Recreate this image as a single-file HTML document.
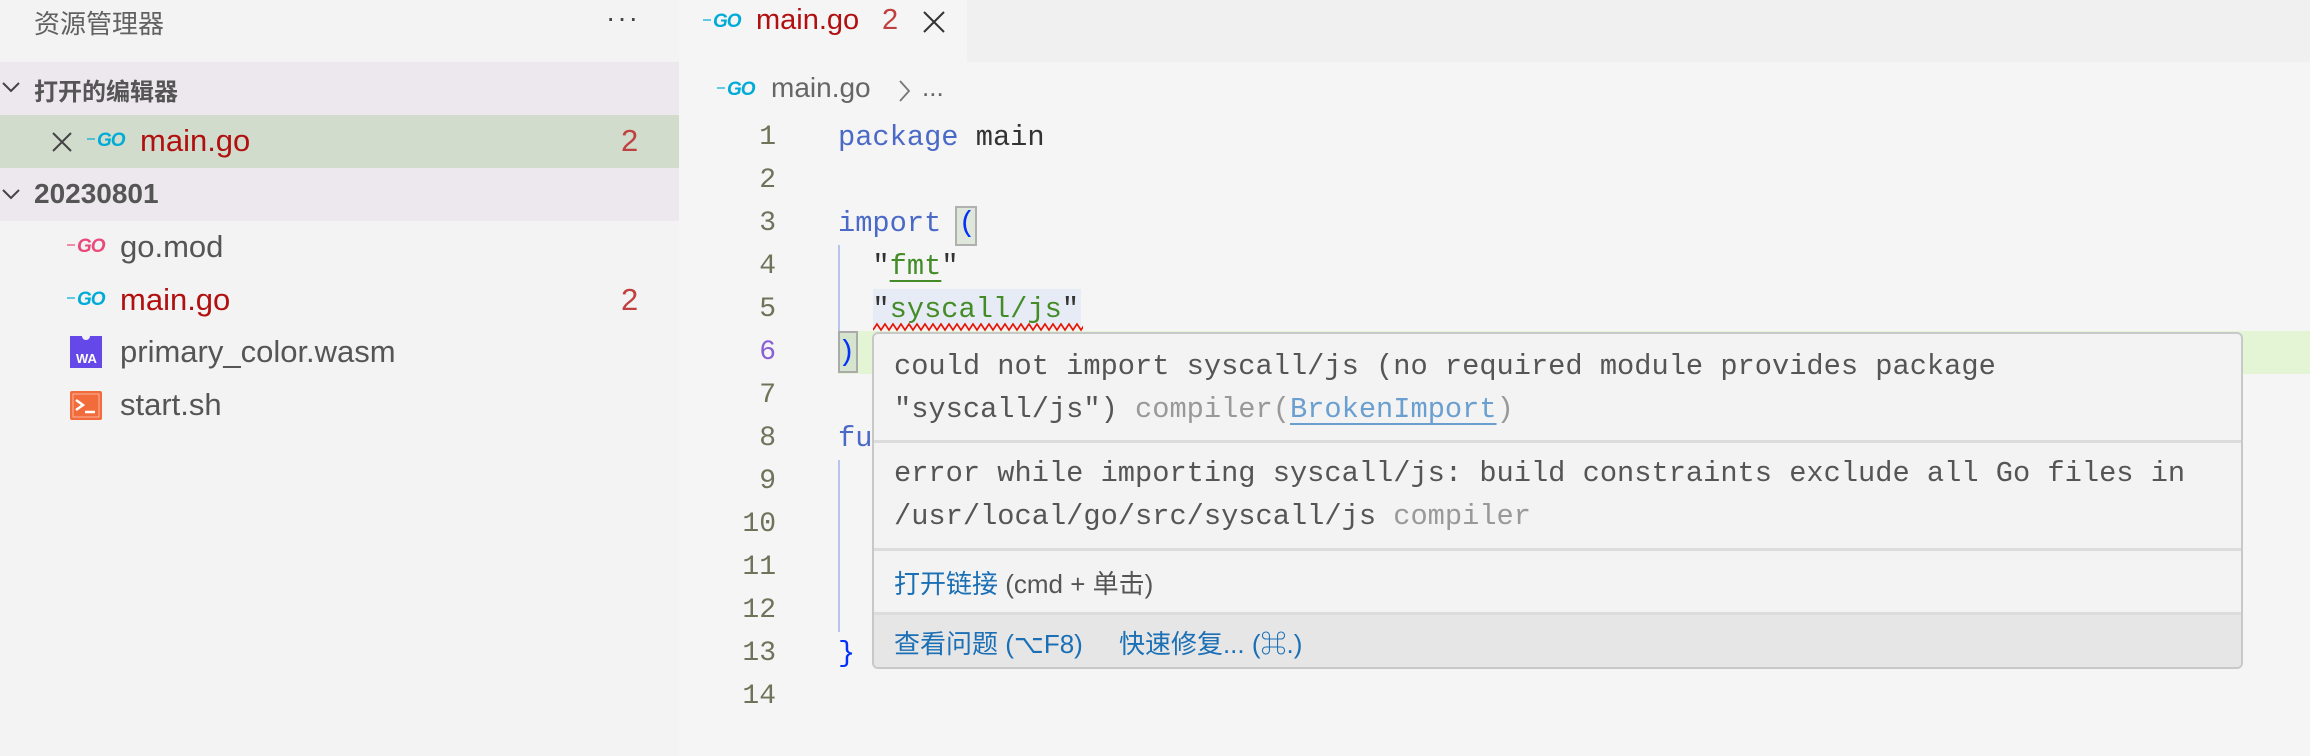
<!DOCTYPE html>
<html><head><meta charset="utf-8"><style>
*{margin:0;padding:0;box-sizing:border-box}
body{width:2310px;height:756px;overflow:hidden;background:#f5f5f5;font-family:"Liberation Sans","Noto Sans CJK SC",sans-serif;position:relative}
.abs{position:absolute;white-space:nowrap}
#side{position:absolute;left:0;top:0;width:679px;height:756px;background:#f3f3f3}
.row{position:absolute;left:0;width:679px;height:53px}
.go{position:absolute;font-family:"Liberation Sans",sans-serif;font-weight:bold;font-style:italic;font-size:19px;letter-spacing:-1px}
.go:before{content:"";position:absolute;left:-10px;top:8px;width:8px;height:2px;border-top:2px solid currentColor;opacity:.6}
.mono{font-family:"Liberation Mono",monospace;font-size:28.7px}
.ln{position:absolute;width:100px;left:676px;text-align:right;color:#6e7359;font-family:"Liberation Mono",monospace;font-size:28px;line-height:43px}
.code{position:absolute;left:838px;line-height:43px;color:#333;font-family:"Liberation Mono",monospace;font-size:28.7px;white-space:pre}
.kw{color:#4b69c6}.str{color:#448c27}
.f{font-size:31px}
</style></head><body>
<div id="side">
 <div class="abs" style="left:34px;top:4px;font-size:26px;color:#616161">资源管理器</div>
 <div class="abs" style="left:606px;top:2px;font-size:28px;color:#444;letter-spacing:2px">···</div>
 <div class="row" style="top:62px;background:#ede8ee"></div>
 <svg class="abs" style="left:2px;top:80px" width="18" height="14"><path d="M1 3 L9 11 L17 3" stroke="#444" stroke-width="2" fill="none"/></svg>
 <div class="abs" style="left:34px;top:72px;font-size:24px;font-weight:bold;color:#555">打开的编辑器</div>
 <div class="row" style="top:115px;background:#d1dccc"></div>
 <svg class="abs" style="left:51px;top:131px" width="22" height="22"><path d="M2 2 L20 20 M20 2 L2 20" stroke="#444" stroke-width="2"/></svg>
 <div class="go" style="left:97px;top:130px;color:#00acd7">GO</div>
 <div class="abs f" style="left:140px;top:123px;color:#b11010">main.go</div>
 <div class="abs f" style="left:621px;top:123px;color:#c04040">2</div>
 <div class="row" style="top:168px;background:#ede8ee"></div>
 <svg class="abs" style="left:2px;top:187px" width="18" height="14"><path d="M1 3 L9 11 L17 3" stroke="#444" stroke-width="2" fill="none"/></svg>
 <div class="abs" style="left:34px;top:178px;font-size:28px;font-weight:bold;color:#555">20230801</div>
 <div class="go" style="left:77px;top:236px;color:#ea4a7a">GO</div>
 <div class="abs f" style="left:120px;top:229px;color:#555">go.mod</div>
 <div class="go" style="left:77px;top:289px;color:#00acd7">GO</div>
 <div class="abs f" style="left:120px;top:282px;color:#b11010">main.go</div>
 <div class="abs f" style="left:621px;top:282px;color:#c04040">2</div>
 <div class="abs" style="left:70px;top:336px;width:32px;height:32px;background:#6548e8;color:#fff;font-size:13px;font-weight:bold;padding:15px 0 0 6px">WA<div style="position:absolute;left:12px;top:-3px;width:8px;height:7px;border-radius:0 0 4px 4px;background:#f3f3f3"></div></div>
 <div class="abs f" style="left:120px;top:334px;color:#555">primary_color.wasm</div>
 <div class="abs" style="left:70px;top:391px;width:32px;height:29px;background:#f26b3a;border-radius:2px"><svg width="32" height="29"><path d="M6 9 L13 14 L6 19" stroke="#fff" stroke-width="2.5" fill="none"/><path d="M15 21 H25" stroke="#fff" stroke-width="2.5"/><rect x="3" y="3" width="26" height="23" fill="none" stroke="#fff" stroke-width="1" opacity=".5"/></svg></div>
 <div class="abs f" style="left:120px;top:387px;color:#555">start.sh</div>
</div>
<div class="abs" style="left:679px;top:0;width:1631px;height:62px;background:#f0f0f0"></div>
<div class="abs" style="left:679px;top:0;width:288px;height:62px;background:#f5f5f5"></div>
<div class="go" style="left:713px;top:11px;color:#00acd7">GO</div>
<div class="abs" style="left:756px;top:4px;font-size:29px;color:#b11010">main.go</div>
<div class="abs" style="left:882px;top:4px;font-size:29px;color:#c04040">2</div>
<svg class="abs" style="left:922px;top:10px" width="24" height="24"><path d="M2 2 L22 22 M22 2 L2 22" stroke="#333" stroke-width="2"/></svg>
<div class="go" style="left:727px;top:79px;color:#00acd7">GO</div>
<div class="abs" style="left:771px;top:72px;font-size:28px;color:#666">main.go</div>
<svg class="abs" style="left:897px;top:79px" width="16" height="24"><path d="M3 2 L12 12 L3 22" stroke="#777" stroke-width="1.8" fill="none"/></svg>
<div class="abs" style="left:922px;top:72px;font-size:26px;color:#666">...</div>
<div class="abs" style="left:838px;top:331px;width:1472px;height:43px;background:#e4f5d6"></div>
<div class="ln" style="top:116px">1<br>2<br>3<br>4<br>5<br><span style="color:#8a5fd6">6</span><br>7<br>8<br>9<br>10<br>11<br>12<br>13<br>14</div>
<div class="abs" style="left:838px;top:245px;width:2px;height:86px;background:#b9c3ef"></div>
<div class="abs" style="left:838px;top:460px;width:2px;height:172px;background:#b9c3ef"></div>
<div class="abs" style="left:873px;top:289px;width:208px;height:40px;background:#e6ebf5"></div>
<div class="abs" style="left:955px;top:206px;width:22px;height:40px;background:#dfe6da;border:2px solid #b0b0b0"></div>
<div class="abs" style="left:838px;top:331px;width:20px;height:42px;background:#d5e4cc;border:2px solid #aaa"></div>
<div class="code" style="top:116px"><span class="kw">package</span> main

<span class="kw">import</span> <span style="color:#0431fa">(</span>
  "<span class="str" style="text-decoration:underline;text-decoration-color:#448c27;text-underline-offset:6px">fmt</span>"
  "<span class="str">syscall/js</span>"
<span style="color:#0431fa">)</span>

<span class="kw">fu</span>




<span style="color:#0431fa">}</span>
</div>
<svg class="abs" style="left:873px;top:322px" width="210" height="10"><path d="M0 8 l4 -6 l4 6 l4 -6 l4 6 l4 -6 l4 6 l4 -6 l4 6 l4 -6 l4 6 l4 -6 l4 6 l4 -6 l4 6 l4 -6 l4 6 l4 -6 l4 6 l4 -6 l4 6 l4 -6 l4 6 l4 -6 l4 6 l4 -6 l4 6 l4 -6 l4 6 l4 -6 l4 6 l4 -6 l4 6 l4 -6 l4 6 l4 -6 l4 6 l4 -6 l4 6 l4 -6 l4 6 l4 -6 l4 6 l4 -6 l4 6 l4 -6 l4 6 l4 -6 l4 6 l4 -6 l4 6 l4 -6 l4 6 l4 -6 l4 6" stroke="#e51400" stroke-width="1.6" fill="none"/></svg>
<div class="abs" style="left:872px;top:332px;width:1371px;height:337px;background:#f3f3f3;border:2px solid #c8c8c8;border-radius:6px;overflow:hidden">
 <div class="abs mono" style="left:20px;top:11px;line-height:43px;color:#555">could not import syscall/js (no required module provides package<br>"syscall/js") <span style="color:#999">compiler(<span style="color:#6a9fd0;text-decoration:underline;text-underline-offset:6px">BrokenImport</span>)</span></div>
 <div class="abs" style="left:0;top:106px;width:1371px;height:3px;background:#dcdcdc"></div>
 <div class="abs mono" style="left:20px;top:118px;line-height:43px;color:#555">error while importing syscall/js: build constraints exclude all Go files in<br>/usr/local/go/src/syscall/js <span style="color:#999">compiler</span></div>
 <div class="abs" style="left:0;top:214px;width:1371px;height:3px;background:#dcdcdc"></div>
 <div class="abs" style="left:20px;top:230px;font-size:26px;color:#555"><span style="color:#1a6fb5">打开链接</span> (cmd + 单击)</div>
 <div class="abs" style="left:0;top:278px;width:1371px;height:59px;background:#e6e6e6;border-top:3px solid #dcdcdc"></div>
 <div class="abs" style="left:20px;top:290px;font-size:26px;color:#1a6fb5">查看问题 (⌥F8)&nbsp;&nbsp;&nbsp;&nbsp;&nbsp;快速修复... (⌘.)</div>
</div>
</body></html>
